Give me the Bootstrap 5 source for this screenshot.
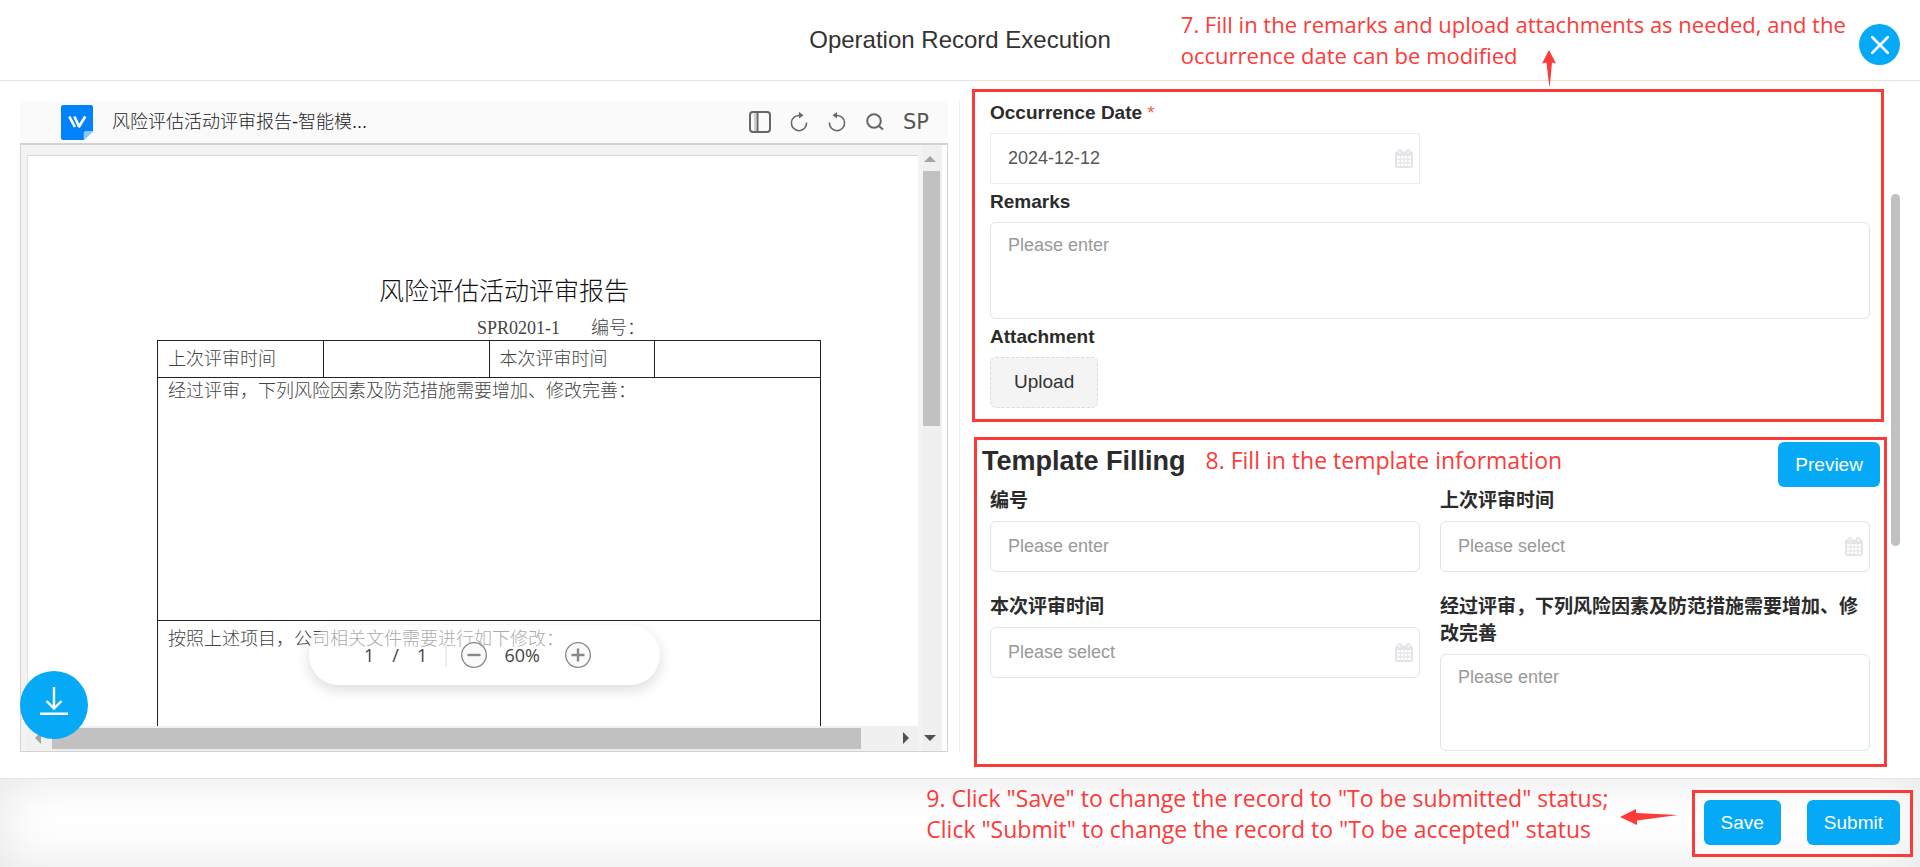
<!DOCTYPE html>
<html lang="en">
<head>
<meta charset="utf-8">
<meta name="viewport" content="width=device-width, initial-scale=1">
<title>Operation Record Execution</title>
<link href="https://cdn.jsdelivr.net/npm/bootstrap@5.3.0/dist/css/bootstrap.min.css" rel="stylesheet">
<style>
  :root { --accent: #05a9f5; --note: #fd3a3a; --line: #e4e4e4; --bar: #c1c1c1; }
  body { font-family: "Liberation Sans", "Noto Sans CJK SC", sans-serif; font-size: 19px; line-height: 27px; color: #2b2b2b; background: #fff; }
  .app { min-height: 100vh; }
  .app-header { height: 81px; border-bottom: 1px solid var(--line); }
  .app-title { font-size: 24px; line-height: 32px; color: #333; }
  .note { font-family: "Open Sans", "Noto Sans", sans-serif; font-size: 23px; line-height: 31px; color: var(--note); white-space: nowrap; }
  .note-top { font-size: 22px; left: 61.5%; top: 9px; }
  .arrow-up { left: 80.3%; top: 50px; }
  .frame { border: 3px solid var(--note); }
  .btn-accent { --bs-btn-bg: var(--accent); --bs-btn-color: #fff; --bs-btn-hover-bg: #0398dd; --bs-btn-hover-color: #fff; border: 0; border-radius: 6px; font-size: 19px; line-height: 27px; padding: 9px 17px; }
  .btn-close-round { width: 41px; height: 41px; right: 20px; top: 24px; background: var(--accent); }

  /* document viewer */
  .viewer-pane { padding: 20px 0 26px 20px; }
  .viewer-wrap { border-right: 1px solid #eee; padding-right: 11px; }
  .viewer-bar { height: 42px; background: #fafafa; padding: 0 19px 0 41px; }
  .file-name { font-size: 18px; font-weight: 300; color: #222; margin-left: 19px; }
  .tool { border: 0; background: none; padding: 0; color: #666; display: flex; }
  .tools { gap: 18px; }
  .tool-sp { font-family: "DejaVu Sans", sans-serif; font-size: 21px; color: #555; }
  .viewer-body { border: 1px solid #d2d2d2; border-top-width: 2px; padding-right: 5px; }
  .viewer-bg { background: #f3f3f3; padding-left: 6px; gap: 5px; }
  .page-col { padding-top: 10px; }
  .page { flex: 1 1 0; background: #fff; border-top: 1px solid #d8d8d8; border-left: 1px solid #e0e0e0; padding: 115px 0 0 129px; color: #444; font-size: 18px; line-height: 24px; font-weight: 300; }
  .page-title { font-size: 25px; line-height: 40px; font-weight: 300; color: #111; margin: 0 0 5px 222px; }
  .page-sub { margin-left: 320px; gap: 31px; font-family: "Liberation Serif", "Noto Sans CJK SC", serif; }
  .doc-table { width: 664px; table-layout: fixed; border-collapse: collapse; }
  .doc-table td { border: 1px solid #222; padding: 0 10px; vertical-align: middle; }
  .doc-table .row-head td { height: 37px; }
  .doc-table .row-mid td { height: 243px; vertical-align: top; padding-top: 1px; }
  .doc-table .row-end td { height: 160px; vertical-align: top; padding-top: 6px; }
  .hbar { height: 25px; background: #f0f0f0; padding: 2px 9px 0 8px; }
  .hbar-thumb { flex: 1 1 0; height: 21px; background: var(--bar); margin: 0 42px 0 11px; }
  .vbar { width: 19px; background: #f0f0f0; padding: 11px 2px 10px 0; }
  .vbar svg { margin-left: 1px; }
  .vbar-thumb { width: 17px; height: 255px; background: var(--bar); margin-top: 9px; }
  .pager { width: 351px; height: 60px; bottom: 67px; left: 50%; margin-left: -175px; border-radius: 30px; background: rgba(255,255,255,.55); box-shadow: 0 5px 14px rgba(0,0,0,.14); font-family: "Open Sans", sans-serif; font-size: 18px; color: #444; padding-left: 55px; }
  .pager-slash { margin: 0 18px; }
  .pager-sep { width: 2px; height: 24px; background: #eee; margin: 0 14px 0 18px; }
  .pager-zoom { width: 78px; text-align: center; padding-right: 8px; }
  .download { width: 68px; height: 68px; left: 0; bottom: 13px; background: var(--accent); }

  /* form */
  .form-pane { padding: 8px 4px 11px 12px; }
  .frame-basic { padding: 7px 11px 7px 15px; margin-right: 3px; margin-bottom: 15px; }
  .frame-template { margin-left: 2px; padding: 2px 0 13px; }
  .field-label { display: block; font-weight: 700; margin-bottom: 7px; }
  .field { margin-bottom: 4px; }
  .grid-template { padding: 0 14px 0 13px; column-gap: 20px; row-gap: 21px; display: grid; grid-template-columns: 1fr 1fr; }
  .box { border: 1px solid #e2e3e5; border-radius: 6px; font-size: 18px; line-height: 27px; padding: 11px 17px; color: #555; height: 51px; display: block; }
  .box::placeholder { color: #999; opacity: 1; }
  textarea.box { height: 97px; padding-top: 9px; resize: none; }
  .box-square { border-radius: 0; border-color: #ececec; }
  .half { width: calc(50% - 10px); }
  .cal { right: 7px; top: 16px; }
  .btn-upload { height: 51px; padding: 0 23px; background: #f4f4f4; border: 1px dashed #dcdcdc; border-radius: 6px; font-size: 19px; color: #333; }
  .template-head { padding: 0 4px 0 5px; }
  .template-title { font-size: 27px; line-height: 38px; font-weight: 700; margin: 0 20px 0 0; }
  .template-head .note { line-height: 36px; }
  .scroll-col { width: 10px; margin-right: 20px; padding-top: 113px; }
  .scroll-thumb { height: 352px; border-radius: 5px; background: var(--bar); }

  .app-footer { height: 89px; border-top: 1px solid var(--line); box-shadow: inset 0 0 50px rgba(0,0,0,.1); padding: 0 7px 0 20px; }
  .footer-note { padding-top: 4px; }
  .arrow-left { margin: 30px 14px 0 11px; }
  .frame-actions { margin-top: 11px; padding: 7px 10px 9px 9px; gap: 26px; }
</style>
</head>
<body>
<div class="app d-flex flex-column">
  <header class="app-header position-relative d-flex align-items-center justify-content-center flex-shrink-0">
    <h1 class="app-title fw-normal m-0">Operation Record Execution</h1>
    <div class="note note-top position-absolute">7. Fill in the remarks and upload attachments as needed, and the<br>occurrence date can be modified</div>
    <svg class="arrow-up position-absolute" width="14" height="36" viewBox="0 0 14 36" fill="#fd3a3a" aria-hidden="true"><path d="M7 0 14 13.500 10 12.500 7.800 36H7.200L4.500 12.500 0 13.500z"/></svg>
    <button type="button" class="btn-close-round btn rounded-circle border-0 p-0 position-absolute d-flex align-items-center justify-content-center" aria-label="Close">
      <svg width="18" height="18" viewBox="0 0 18 18" fill="none" stroke="#fff" stroke-width="2.500" stroke-linecap="round"><path d="M1 1 17 17M17 1 1 17"/></svg>
    </button>
  </header>

  <main class="row g-0 flex-grow-1">
    <section class="viewer-pane col-6 d-flex">
      <div class="viewer-wrap d-flex flex-grow-1">
        <div class="position-relative d-flex flex-column flex-grow-1">
          <div class="viewer-bar d-flex align-items-center">
            <svg width="32" height="35" viewBox="0 0 31 35" preserveAspectRatio="none" aria-hidden="true"><path d="M2 0h27a2 2 0 0 1 2 2v24l-9 9H2a2 2 0 0 1-2-2V2a2 2 0 0 1 2-2z" fill="#0082fc"/><path d="M22 35v-7a2 2 0 0 1 2-2h7z" fill="#8cc6fe"/><path d="M8 11.500 13.500 22M13 11.500 17.500 21.500 23.500 11.500" fill="none" stroke="#fff" stroke-width="2.600" stroke-linejoin="round"/></svg>
            <span class="file-name">风险评估活动评审报告-智能模...</span>
            <div class="tools ms-auto d-flex align-items-center">
              <button type="button" class="tool" aria-label="Toggle sidebar"><svg width="22" height="22" viewBox="0 0 22 22" fill="none" stroke="currentColor" stroke-width="2"><rect x="1" y="1" width="20" height="20" rx="3"/><path d="M8.500 2v18" /><path d="M6 2v18" stroke-width=".6"/></svg></button>
              <button type="button" class="tool" aria-label="Rotate clockwise"><svg width="20" height="22" viewBox="0 0 20 22" fill="none" stroke="currentColor" stroke-width="1.500"><path d="M11.500 4.600A7.600 7.600 0 1 0 17.600 11.500"/><path d="M10 1v6.500l4.500-3.300z" fill="currentColor" stroke="none"/></svg></button>
              <button type="button" class="tool" aria-label="Rotate counterclockwise"><svg width="20" height="22" viewBox="0 0 20 22" fill="none" stroke="currentColor" stroke-width="1.500"><path d="M8.500 4.600A7.600 7.600 0 1 1 2.400 11.500"/><path d="M10 1v6.500L5.500 4.200z" fill="currentColor" stroke="none"/></svg></button>
              <button type="button" class="tool" aria-label="Search"><svg width="20" height="20" viewBox="0 0 20 20" fill="none" stroke="currentColor" stroke-width="2"><circle cx="9" cy="9" r="6.800"/><path d="m14 14 4 3.500"/></svg></button>
              <button type="button" class="tool tool-sp">SP</button>
            </div>
          </div>
          <div class="viewer-body d-flex flex-grow-1">
            <div class="viewer-bg d-flex flex-grow-1">
              <div class="page-col d-flex flex-column flex-grow-1">
                <div class="page overflow-hidden">
                  <h2 class="page-title">风险评估活动评审报告</h2>
                  <div class="page-sub d-flex"><span>SPR0201-1</span><span>编号：</span></div>
                  <table class="doc-table">
                    <tbody>
                      <tr class="row-head"><td>上次评审时间</td><td></td><td>本次评审时间</td><td></td></tr>
                      <tr class="row-mid"><td colspan="4">经过评审，下列风险因素及防范措施需要增加、修改完善：</td></tr>
                      <tr class="row-end"><td colspan="4">按照上述项目，公司相关文件需要进行如下修改：</td></tr>
                    </tbody>
                  </table>
                </div>
                <div class="hbar d-flex">
                  <svg class="mt-1" width="6" height="12" viewBox="0 0 6 12" fill="#a3a3a3" aria-hidden="true"><path d="M6 0v12L0 6z"/></svg>
                  <div class="hbar-thumb"></div>
                  <svg class="mt-1" width="6" height="12" viewBox="0 0 6 12" fill="#505050" aria-hidden="true"><path d="M0 0v12l6-6z"/></svg>
                </div>
              </div>
              <div class="vbar d-flex flex-column align-items-start">
                <svg width="12" height="6" viewBox="0 0 12 6" fill="#a3a3a3" aria-hidden="true"><path d="M0 6h12L6 0z"/></svg>
                <div class="vbar-thumb"></div>
                <svg class="mt-auto" width="12" height="6" viewBox="0 0 12 6" fill="#505050" aria-hidden="true"><path d="M0 0h12L6 6z"/></svg>
              </div>
            </div>
          </div>
          <div class="pager position-absolute d-flex align-items-center">
            <span>1</span><span class="pager-slash">/</span><span>1</span>
            <span class="pager-sep"></span>
            <button type="button" class="tool" aria-label="Zoom out"><svg width="26" height="26" viewBox="0 0 26 26" fill="#fafafa" stroke="#888"><circle cx="13" cy="13" r="12.300" stroke-width="1.300"/><path d="M6.500 13h13" stroke-width="2.400"/></svg></button>
            <span class="pager-zoom">60%</span>
            <button type="button" class="tool" aria-label="Zoom in"><svg width="26" height="26" viewBox="0 0 26 26" fill="#fafafa" stroke="#888"><circle cx="13" cy="13" r="12.300" stroke-width="1.300"/><path d="M6.500 13h13M13 6.500v13" stroke-width="2.400"/></svg></button>
          </div>
          <button type="button" class="download btn rounded-circle border-0 p-0 position-absolute" aria-label="Download">
            <svg class="d-block mx-auto mb-2" width="28" height="28" viewBox="0 0 28 28" fill="none" stroke="#fff" stroke-width="2.400"><path d="M14 0v21M6.500 14l7.500 7.500 7.500-7.500M0 26.800h28"/></svg>
          </button>
        </div>
      </div>
    </section>

    <section class="col-6 d-flex">
      <form class="form-pane flex-grow-1">
        <div class="frame frame-basic">
          <div class="field">
            <label class="field-label" for="occDate">Occurrence Date <span class="fw-normal" style="color:#e8683f">*</span></label>
            <div class="half position-relative">
              <input id="occDate" class="box box-square w-100" type="text" value="2024-12-12">
              <svg class="cal position-absolute" width="18" height="19" viewBox="0 0 18 19" aria-hidden="true"><use href="#calendar"/></svg>
            </div>
          </div>
          <div class="field">
            <label class="field-label" for="remarks">Remarks</label>
            <textarea id="remarks" class="box w-100" placeholder="Please enter"></textarea>
          </div>
          <div class="field">
            <label class="field-label" for="upload">Attachment</label>
            <button id="upload" type="button" class="btn btn-upload d-block">Upload</button>
          </div>
        </div>

        <div class="frame frame-template">
          <div class="template-head d-flex align-items-start">
            <h2 class="template-title">Template Filling</h2>
            <span class="note">8. Fill in the template information</span>
            <button type="button" class="btn btn-accent ms-auto">Preview</button>
          </div>
          <div class="grid-template">
            <div>
              <label class="field-label" for="docNo">编号</label>
              <input id="docNo" class="box w-100" type="text" placeholder="Please enter">
            </div>
            <div>
              <label class="field-label" for="lastReview">上次评审时间</label>
              <div class="position-relative">
                <input id="lastReview" class="box w-100" type="text" placeholder="Please select">
                <svg class="cal position-absolute" width="18" height="19" viewBox="0 0 18 19" aria-hidden="true"><use href="#calendar"/></svg>
              </div>
            </div>
            <div>
              <label class="field-label" for="thisReview">本次评审时间</label>
              <div class="position-relative">
                <input id="thisReview" class="box w-100" type="text" placeholder="Please select">
                <svg class="cal position-absolute" width="18" height="19" viewBox="0 0 18 19" aria-hidden="true"><use href="#calendar"/></svg>
              </div>
            </div>
            <div>
              <label class="field-label" for="measures">经过评审，下列风险因素及防范措施需要增加、修改完善</label>
              <textarea id="measures" class="box w-100" placeholder="Please enter"></textarea>
            </div>
          </div>
        </div>
      </form>
      <div class="scroll-col"><div class="scroll-thumb"></div></div>
    </section>
  </main>

  <footer class="app-footer d-flex align-items-start justify-content-end flex-shrink-0">
    <div class="note footer-note">9. Click "Save" to change the record to "To be submitted" status;<br>Click "Submit" to change the record to "To be accepted" status</div>
    <svg class="arrow-left flex-shrink-0" width="58" height="16" viewBox="0 0 58 16" fill="#fd3a3a" aria-hidden="true"><path d="M0 8 16 0v4l42 2-41 5.500V16z"/></svg>
    <div class="frame frame-actions d-flex flex-shrink-0">
      <button type="button" class="btn btn-accent">Save</button>
      <button type="button" class="btn btn-accent">Submit</button>
    </div>
  </footer>
</div>

<svg class="d-none">
  <symbol id="calendar" viewBox="0 0 18 19">
    <path d="M2 2.500h14a2 2 0 0 1 2 2V17a2 2 0 0 1-2 2H2a2 2 0 0 1-2-2V4.500a2 2 0 0 1 2-2z" fill="#e3e5e8"/>
    <rect x="2.500" y="0" width="4.500" height="6" rx="2" fill="#e3e5e8"/><rect x="11" y="0" width="4.500" height="6" rx="2" fill="#e3e5e8"/>
    <path d="M4.700 1.500v3M13.200 1.500v3" stroke="#fff"/>
    <path d="M2 7h2.800v2.600H2zM5.900 7h2.700v2.600H5.900zM9.600 7h2.700v2.600H9.600zM13.300 7H16v2.600h-2.700zM2 10.700h2.800v2.600H2zM5.900 10.700h2.700v2.600H5.900zM9.600 10.700h2.700v2.600H9.600zM13.300 10.700H16v2.600h-2.700zM2 14.400h2.800V17H2zM5.900 14.400h2.700V17H5.900zM9.600 14.400h2.700V17H9.600zM13.300 14.400H16V17h-2.700z" fill="#fff"/>
  </symbol>
</svg>
<script src="https://cdn.jsdelivr.net/npm/bootstrap@5.3.0/dist/js/bootstrap.bundle.min.js"></script>
</body>
</html>
